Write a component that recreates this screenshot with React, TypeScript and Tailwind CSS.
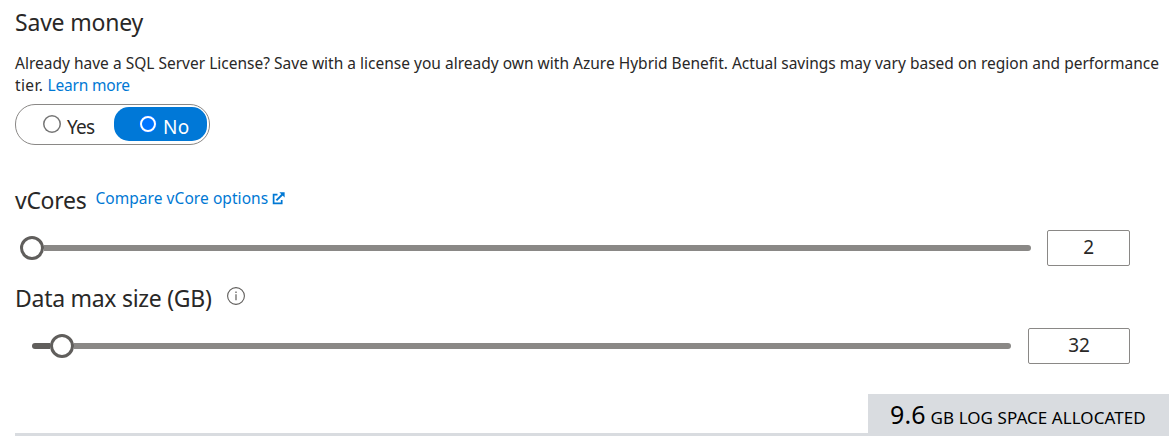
function ValueBox({ value, width }: { value: string; width: string }) {
  return (
    <div
      className={`flex h-9 shrink-0 items-center justify-center rounded-[2px] border border-[#8a8886] pb-[2px] text-[19px] leading-6 tracking-[-0.2px] ${width}`}
    >
      {value}
    </div>
  );
}

function Thumb() {
  return <span className="size-6 shrink-0 rounded-full border-[3px] border-[#605e5c] bg-white" />;
}

function OpenIcon() {
  return (
    <svg className="mt-[12px] ml-1 size-[13px]" viewBox="0 0 13 13" fill="none" stroke="#0078d4">
      <path d="M5.5 2.6H1.6V11.4H9.7V8" strokeWidth="1.7" />
      <path d="M4.4 8.4L10.6 2.2" strokeWidth="2" />
      <path d="M7.4 0.2H12.6V5.4Z" fill="#0078d4" stroke="none" />
    </svg>
  );
}

function InfoIcon() {
  return (
    <svg className="ml-[15px] mt-[5px] size-[18px]" viewBox="0 0 18 18" fill="none" stroke="#605e5c">
      <circle cx="9" cy="9" r="8.4" strokeWidth="1.1" />
      <path d="M9 7.2V13.2" strokeWidth="1.2" />
      <path d="M9 4.6V5.9" strokeWidth="1.3" />
    </svg>
  );
}

export default function App() {
  return (
    <div className="flex h-[440px] w-[1173px] flex-col overflow-hidden bg-white pl-[15px] font-['Noto_Sans','Open_Sans',sans-serif] text-[#292827]">
      <h2 className="mt-[6px] h-8 text-[23px] leading-8 tracking-[-0.2px]">Save money</h2>

      <p className="mt-[14px] h-11 text-[15.5px] leading-[22px] whitespace-nowrap tracking-[0.006px]">
        Already have a SQL Server License? Save with a license you already own with Azure Hybrid Benefit. Actual savings
        may vary based on region and performance
        <br />
        <span className="tracking-[0.35px]">tier. </span>
        <a className="tracking-[-0.2px] text-[#0078d4]">Learn more</a>
      </p>

      <div className="mt-2 flex h-[41px] w-[195px] rounded-[20px] border border-[#8a8886] pt-[2px]">
        <div className="flex h-[34px] w-[98px] pl-[27px]">
          <span className="mt-[8px] size-[18px] rounded-full shadow-[inset_0_0_0_1.5px_#767676]" />
          <span className="ml-[6px] mt-[8px] text-[19px] leading-6 tracking-[-0.7px]">Yes</span>
        </div>
        <div className="flex h-[34px] w-[93px] rounded-[15px] bg-[#0078d7] pl-[25px] text-white">
          <span className="mt-[8px] flex size-[18px] items-center justify-center rounded-full bg-[#0075ff]">
            <span className="size-4 rounded-full border-2 border-white" />
          </span>
          <span className="ml-[6px] mt-[8px] text-[19px] leading-6 tracking-[0.3px]">No</span>
        </div>
      </div>

      <div className="mt-[39px] flex h-9">
        <span className="text-[23px] leading-[32px] tracking-[-0.3px]">vCores</span>
        <a className="ml-[9px] flex text-[#0078d4]">
          <span className="text-[15.5px] leading-[28px] tracking-[0.06px]">Compare vCore options</span>
          <span className="-mt-[4px] flex">
            <OpenIcon />
          </span>
        </a>
      </div>

      <div className="mt-[10px] flex h-9 items-center">
        <div className="flex w-[1016px] items-center pl-[4.5px]">
          <Thumb />
          <span className="h-[6px] grow rounded-r-full bg-[#8a8886]" />
        </div>
        <div className="ml-4">
          <ValueBox value="2" width="w-[83px]" />
        </div>
      </div>

      <div className="mt-[16px] flex h-9">
        <span className="text-[23px] leading-[32px] tracking-[-0.28px]">Data max size (GB)</span>
        <InfoIcon />
      </div>

      <div className="mt-[10px] flex h-9 items-center">
        <div className="flex w-[996px] items-center pl-[17px]">
          <span className="h-[6px] w-[17.5px] rounded-l-full bg-[#605e5c]" />
          <Thumb />
          <span className="h-[6px] grow rounded-r-full bg-[#8a8886]" />
        </div>
        <div className="ml-[17px]">
          <ValueBox value="32" width="w-[102px]" />
        </div>
      </div>

      <div className="mt-[30px] flex h-[42px] w-[1154px] justify-end border-b-[3px] border-[#d9dce0]">
        <div className="flex h-[39px] w-[301px] items-baseline bg-[#d9dce0] pl-[22px] pt-[4px] whitespace-nowrap text-black">
          <span className="text-[25px] leading-8 tracking-[0.1px]">9.6</span>
          <span className="ml-[5px] text-[17px] leading-6 tracking-[0.06px]">GB LOG SPACE ALLOCATED</span>
        </div>
      </div>
    </div>
  );
}
